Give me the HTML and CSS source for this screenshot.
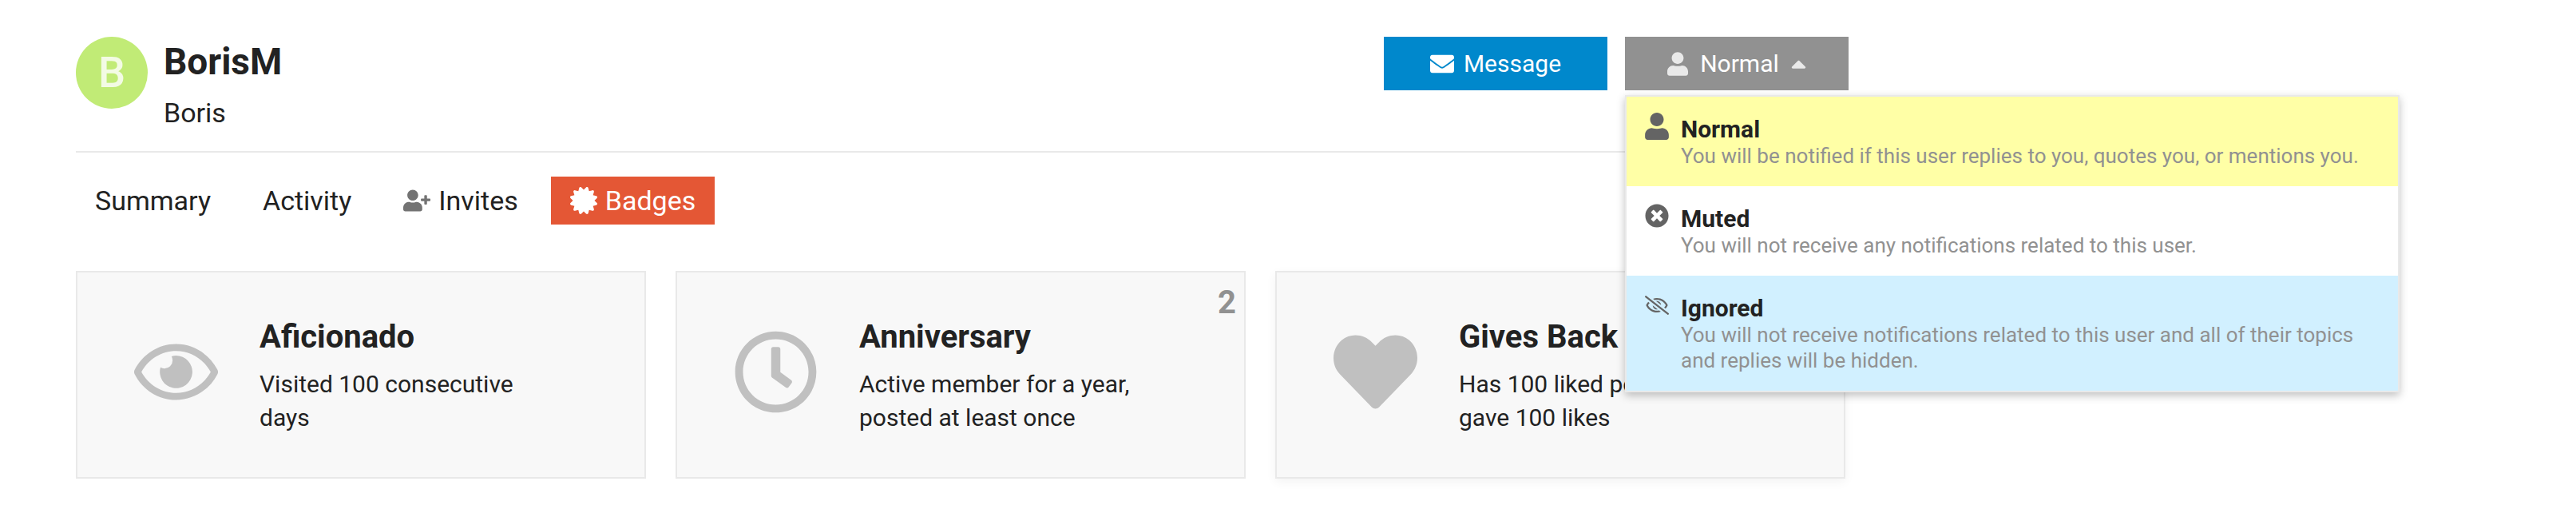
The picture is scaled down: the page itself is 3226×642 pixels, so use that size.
FILE: index.html
```
<!DOCTYPE html>
<html lang="en">
<head>
    <meta charset="UTF-8">
    <meta name="viewport" content="width=device-width, initial-scale=1.0">
    <title>BorisM - Badges</title>
    <link rel="stylesheet" href="styles.css">
</head>
<body>

<svg class="sprite" aria-hidden="true">
    <symbol id="user" viewBox="0 0 448 512"><path d="M224 256c70.700 0 128-57.300 128-128S294.700 0 224 0 96 57.300 96 128s57.300 128 128 128zm95.800 32.600C302.300 288.600 280 304 224 304s-78.300-15.400-95.800-15.400C57.300 288.600 0 346.300 0 417.200V464c0 26.500 21.500 48 48 48h352c26.500 0 48-21.500 48-48v-46.800c0-70.900-57.300-128.600-128.200-128.600z"/></symbol>
    <symbol id="user-plus" viewBox="0 0 640 512"><path d="M624 208h-64v-64c0-8.800-7.200-16-16-16h-32c-8.800 0-16 7.200-16 16v64h-64c-8.800 0-16 7.200-16 16v32c0 8.800 7.200 16 16 16h64v64c0 8.800 7.200 16 16 16h32c8.800 0 16-7.200 16-16v-64h64c8.800 0 16-7.200 16-16v-32c0-8.800-7.200-16-16-16zm-400 48c70.700 0 128-57.300 128-128S294.700 0 224 0 96 57.300 96 128s57.300 128 128 128zm89.600 32h-16.700c-22.200 10.200-46.900 16-72.900 16s-50.600-5.800-72.900-16h-16.700C60.200 288 0 348.200 0 422.400V464c0 26.500 21.500 48 48 48h352c26.500 0 48-21.500 48-48v-41.600c0-74.200-60.200-134.400-134.400-134.400z"/></symbol>
    <symbol id="certificate" viewBox="0 0 512 512"><path d="M458.622 255.920l45.985-45.005c13.708-12.977 7.316-36.039-10.664-40.339l-62.650-15.990 17.661-62.015c4.991-17.838-11.829-34.663-29.661-29.671l-61.994 17.667-15.984-62.671C337.085.197 313.765-6.276 300.990 7.228L256 53.570 211.011 7.229c-12.630-13.351-36.047-7.234-40.325 10.668l-15.984 62.671-61.995-17.667C74.870 57.907 58.056 74.738 63.046 92.572l17.661 62.015-62.650 15.990C.069 174.878-6.310 197.944 7.392 210.915l45.985 45.005-45.985 45.004c-13.708 12.977-7.316 36.039 10.664 40.339l62.650 15.990-17.661 62.015c-4.991 17.838 11.829 34.663 29.661 29.671l61.994-17.667 15.984 62.671c4.439 18.575 27.696 24.018 40.325 10.668L256 458.610l44.989 46.001c12.500 13.488 35.987 7.486 40.325-10.668l15.984-62.671 61.994 17.667c17.836 4.994 34.651-11.837 29.661-29.671l-17.661-62.015 62.650-15.990c17.987-4.302 24.366-27.367 10.664-40.339l-45.984-45.004z"/></symbol>
    <symbol id="envelope" viewBox="0 0 512 512"><path d="M502.300 190.800c3.900-3.100 9.700-.2 9.700 4.700V400c0 26.500-21.500 48-48 48H48c-26.500 0-48-21.500-48-48V195.600c0-5 5.700-7.800 9.700-4.700 22.400 17.400 52.100 39.500 154.100 113.600 21.100 15.400 56.700 47.800 92.200 47.600 35.700.3 72-32.800 92.300-47.600 102-74.100 131.600-96.300 154-113.700zM256 320c23.200.4 56.600-29.200 73.400-41.400 132.700-96.300 142.800-104.700 173.400-128.700 5.800-4.500 9.200-11.500 9.200-18.900v-19c0-26.500-21.500-48-48-48H48c-26.500 0-48 21.500-48 48v19c0 7.400 3.400 14.300 9.200 18.900 30.600 23.900 40.700 32.400 173.400 128.700 16.800 12.200 50.200 41.800 73.400 41.400z"/></symbol>
    <symbol id="caret-up" viewBox="0 0 320 512"><path d="M288.662 352H31.338c-17.818 0-26.741-21.543-14.142-34.142l128.662-128.662c7.810-7.810 20.474-7.810 28.284 0l128.662 128.662c12.600 12.599 3.676 34.142-14.142 34.142z"/></symbol>
    <symbol id="times-circle" viewBox="0 0 512 512"><path d="M256 8C119 8 8 119 8 256s111 248 248 248 248-111 248-248S393 8 256 8zm121.600 313.100c4.700 4.700 4.700 12.300 0 17L338 377.600c-4.700 4.700-12.300 4.700-17 0L256 312l-65.100 65.600c-4.700 4.700-12.300 4.700-17 0L134.400 338c-4.700-4.700-4.700-12.300 0-17l65.600-65-65.600-65.100c-4.700-4.700-4.700-12.300 0-17l39.600-39.600c4.700-4.700 12.300-4.700 17 0l65 65.700 65.100-65.600c4.700-4.700 12.300-4.700 17 0l39.600 39.600c4.700 4.700 4.700 12.300 0 17L312 256l65.600 65.100z"/></symbol>
    <symbol id="eye-slash" viewBox="0 0 640 512"><path d="M634 471L36 3.510A16 16 0 0 0 13.510 6l-10 12.490A16 16 0 0 0 6 41l598 467.490a16 16 0 0 0 22.490-2.490l10-12.490A16 16 0 0 0 634 471zM296.790 146.470l134.790 105.380C429.360 191.910 380.480 144 320 144a112.260 112.260 0 0 0-23.210 2.470zm46.420 219.070L208.420 260.160C210.650 320.090 259.530 368 320 368a113 113 0 0 0 23.210-2.460zM320 112c98.650 0 189.090 55 237.930 144a285.530 285.530 0 0 1-44 60.200l37.740 29.500a333.700 333.700 0 0 0 52.900-75.110 32.350 32.350 0 0 0 0-29.190C550.290 135.590 442.930 64 320 64c-36.700 0-71.710 7-104.630 18.810l46.410 36.290c18.940-4.300 38.340-7.100 58.220-7.100zm0 288c-98.650 0-189.080-55-237.930-144a285.470 285.470 0 0 1 44.050-60.190l-37.740-29.500a333.600 333.600 0 0 0-52.890 75.100 32.350 32.350 0 0 0 0 29.190C89.720 376.410 197.080 448 320 448c36.700 0 71.710-7.050 104.630-18.810l-46.410-36.280C359.280 397.200 339.890 400 320 400z"/></symbol>
    <symbol id="eye" viewBox="0 0 576 512"><path d="M288 144a110.940 110.940 0 0 0-31.240 5 55.400 55.400 0 0 1 7.240 27 56 56 0 0 1-56 56 55.400 55.400 0 0 1-27-7.240A111.710 111.710 0 1 0 288 144zm284.520 97.400C518.290 135.590 410.930 64 288 64S57.680 135.640 3.480 241.410a32.350 32.350 0 0 0 0 29.190C57.710 376.410 165.070 448 288 448s230.320-71.640 284.520-177.410a32.350 32.350 0 0 0 0-29.190zM288 400c-98.650 0-189.090-55-237.930-144C98.910 167 189.340 112 288 112s189.090 55 237.930 144C477.100 345 386.660 400 288 400z"/></symbol>
    <symbol id="clock" viewBox="0 0 512 512"><path d="M256 8C119 8 8 119 8 256s111 248 248 248 248-111 248-248S393 8 256 8zm0 448c-110.500 0-200-89.500-200-200S145.500 56 256 56s200 89.500 200 200-89.500 200-200 200zm61.800-104.400l-84.900-61.700c-3.100-2.300-4.900-5.900-4.900-9.700V116c0-6.600 5.400-12 12-12h32c6.600 0 12 5.400 12 12v141.700l66.800 48.600c5.400 3.900 6.500 11.400 2.600 16.800L334.600 349c-3.900 5.300-11.400 6.500-16.800 2.600z"/></symbol>
    <symbol id="heart" viewBox="0 0 512 512"><path d="M462.300 62.600C407.500 15.900 326 24.300 275.700 76.200L256 96.500l-19.700-20.300C186.100 24.300 104.500 15.900 49.700 62.600c-62.800 53.600-66.100 149.800-9.900 207.900l193.500 199.800c12.500 12.900 32.800 12.900 45.300 0l193.500-199.800c56.300-58.100 53-154.300-9.800-207.900z"/></symbol>
</svg>

<main class="profile">
    <header class="profile-header">
        <div class="avatar">B</div>
        <div class="names">
            <h1>BorisM</h1>
            <h2>Boris</h2>
        </div>
        <div class="controls">
            <button class="btn btn-primary" type="button">
                <svg class="icon"><use href="#envelope"/></svg>
                <span>Message</span>
            </button>
            <div class="dropdown">
                <button class="btn btn-toggle" type="button" aria-haspopup="true" aria-expanded="true">
                    <svg class="icon"><use href="#user"/></svg>
                    <span>Normal</span>
                    <svg class="icon caret"><use href="#caret-up"/></svg>
                </button>
                <ul class="menu">
                    <li>
                        <button class="option selected" type="button">
                            <svg class="icon"><use href="#user"/></svg>
                            <span class="option-text">
                                <strong>Normal</strong>
                                <span class="desc">You will be notified if this user replies to you, quotes you, or mentions you.</span>
                            </span>
                        </button>
                    </li>
                    <li>
                        <button class="option" type="button">
                            <svg class="icon"><use href="#times-circle"/></svg>
                            <span class="option-text">
                                <strong>Muted</strong>
                                <span class="desc">You will not receive any notifications related to this user.</span>
                            </span>
                        </button>
                    </li>
                    <li>
                        <button class="option highlighted" type="button">
                            <svg class="icon"><use href="#eye-slash"/></svg>
                            <span class="option-text">
                                <strong>Ignored</strong>
                                <span class="desc">You will not receive notifications related to this user and all of their topics and replies will be hidden.</span>
                            </span>
                        </button>
                    </li>
                </ul>
            </div>
        </div>
    </header>

    <nav class="tabs">
        <a href="#summary">Summary</a>
        <a href="#activity">Activity</a>
        <a href="#invites"><svg class="icon"><use href="#user-plus"/></svg>Invites</a>
        <a href="#badges" class="active"><svg class="icon"><use href="#certificate"/></svg>Badges</a>
    </nav>

    <section class="badges">
        <article class="badge-card">
            <svg class="badge-icon"><use href="#eye"/></svg>
            <div class="badge-info">
                <h3>Aficionado</h3>
                <p>Visited 100 consecutive days</p>
            </div>
        </article>
        <article class="badge-card">
            <span class="count">2</span>
            <svg class="badge-icon"><use href="#clock"/></svg>
            <div class="badge-info">
                <h3>Anniversary</h3>
                <p>Active member for a year, posted at least once</p>
            </div>
        </article>
        <article class="badge-card hover">
            <svg class="badge-icon"><use href="#heart"/></svg>
            <div class="badge-info">
                <h3>Gives Back</h3>
                <p>Has 100 liked posts and gave 100 likes</p>
            </div>
        </article>
    </section>
</main>

</body>
</html>
```
FILE: styles.css
```
* {
    box-sizing: border-box;
}
body {
    margin: 0;
    background: #fff;
    color: #222;
    font-family: Roboto, "Liberation Sans", sans-serif;
    font-size: 30px;
    line-height: 42px;
}
h1, h2, h3, p, ul {
    margin: 0;
    padding: 0;
}
button {
    border: 0;
    font: inherit;
    cursor: pointer;
}
.sprite {
    display: none;
}
.icon {
    width: 30px;
    height: 30px;
    flex: none;
    fill: currentColor;
}
.profile {
    max-width: 2315px;
    padding: 46px 0 43px 95px;
}

/* header */
.profile-header {
    display: flex;
    align-items: flex-start;
    height: 145px;
    border-bottom: 2px solid #e9e9e9;
}
.avatar {
    width: 90px;
    height: 90px;
    border-radius: 50%;
    background: #c1eb76;
    color: #f3fbe4;
    font-size: 54px;
    font-weight: 500;
    line-height: 90px;
    text-align: center;
}
.names {
    flex: 1;
    margin-left: 20px;
}
h1 {
    font-size: 46px;
    line-height: 62px;
}
h2 {
    margin-top: 12px;
    font-size: 34px;
    font-weight: 400;
    line-height: 42px;
}
.controls {
    display: flex;
    gap: 22px;
}
.btn {
    display: flex;
    align-items: center;
    justify-content: center;
    gap: 12px;
    width: 280px;
    height: 67px;
    color: #fff;
}
.btn-primary {
    background: #0088cc;
}
.btn-toggle {
    gap: 15px;
    background: #919191;
}
.btn-toggle .icon {
    width: 26px;
    color: #e9e9e9;
}
.btn-toggle .caret {
    width: 19px;
}

/* notification menu */
.dropdown {
    position: relative;
}
.menu {
    position: absolute;
    top: 73px;
    left: 0;
    z-index: 10;
    width: 970px;
    border: 2px solid #e9e9e9;
    background: #fff;
    list-style: none;
    box-shadow: 0 4px 10px rgba(0, 0, 0, 0.25);
}
.option {
    display: flex;
    align-items: flex-start;
    gap: 15px;
    width: 100%;
    padding: 20px 22px 22px 23px;
    background: none;
    color: #222;
    text-align: left;
}
.option.selected {
    background: #ffffa6;
}
.option.highlighted {
    background: #d1f0ff;
}
.option .icon {
    height: 34px;
    color: #646464;
}
.option-text {
    padding-top: 3px;
}
.option strong,
.desc {
    display: block;
}
.option strong {
    line-height: 35px;
}
.desc {
    color: #919191;
    font-size: 26px;
    line-height: 32px;
}

/* tabs */
.tabs {
    display: flex;
    gap: 17px;
    margin-top: 30px;
}
.tabs a {
    display: flex;
    align-items: center;
    padding: 0 24px;
    color: #222;
    font-size: 34px;
    line-height: 60px;
    text-decoration: none;
}
.tabs .icon {
    width: 34px;
    height: 34px;
    margin-right: 10px;
    color: #737373;
}
.tabs .active,
.tabs .active .icon {
    background: #e45735;
    color: #fff;
}

/* badges */
.badges {
    display: grid;
    grid-template-columns: repeat(3, 1fr);
    gap: 37px;
    margin: 58px 4px 0 0;
}
.badge-card {
    position: relative;
    display: flex;
    align-items: flex-start;
    gap: 52px;
    padding: 57px 110px 53px 71px;
    border: 2px solid #e9e9e9;
    background: #f8f8f8;
}
.badge-card.hover {
    box-shadow: 0 4px 12px rgba(0, 0, 0, 0.05);
}
.badge-icon {
    width: 105px;
    height: 105px;
    flex: none;
    margin-top: 15px;
    fill: #c0c0c0;
}
.badge-info {
    flex: 1;
}
h3 {
    margin-bottom: 14px;
    font-size: 40px;
    line-height: 48px;
}
.count {
    position: absolute;
    top: 14px;
    right: 10px;
    color: #919191;
    font-size: 40px;
    font-weight: 700;
    line-height: 48px;
}
```
